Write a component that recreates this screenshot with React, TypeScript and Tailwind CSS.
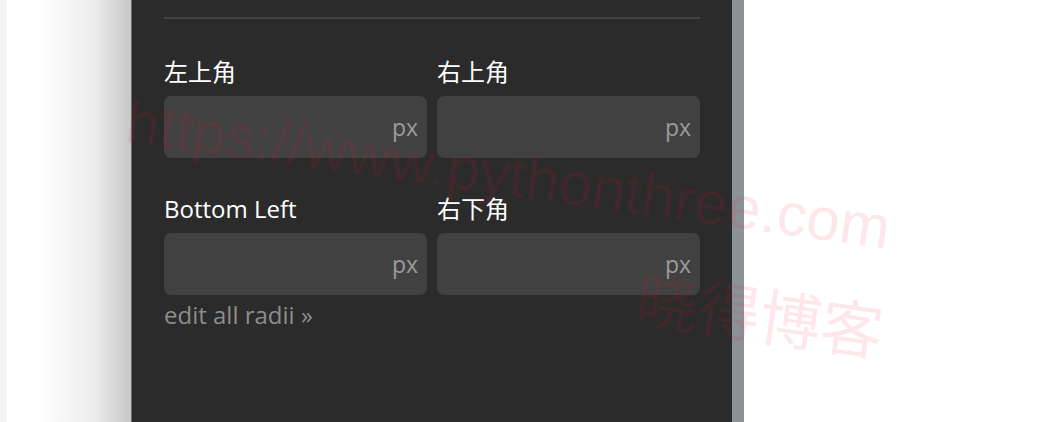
import React from "react";

const corners = [
  { id: "tl", label: "左上角" },
  { id: "tr", label: "右上角" },
  { id: "bl", label: "Bottom Left" },
  { id: "br", label: "右下角" },
];

function RadiusField({ label }: { label: string }) {
  return (
    <div className="flex flex-col">
      <label className="h-8 text-[24px] leading-8 text-white">{label}</label>
      <div className="mt-2 flex h-[62px] items-center justify-end rounded-[7px] bg-[#414141] pr-[9px]">
        <span className="text-[23px] leading-none text-[#9b9b9b]">px</span>
      </div>
    </div>
  );
}

export default function App() {
  return (
    <div className="relative flex h-[422px] w-[1050px] overflow-hidden bg-white font-['Open_Sans','Noto_Sans_CJK_SC',sans-serif]">
      <div className="w-[7px] bg-[#f4f4f4]" />
      <div className="w-[124px] bg-linear-to-r from-white from-25% via-[#ececec] via-70% to-[#c7c7c7]" />

      {/* panel */}
      <div className="w-[601px] border-l border-[#6a6a6a] bg-[#2b2b2b] px-8 pt-[17px]">
        <div className="h-[2px] bg-[#434343]" />

        <div className="mt-[37px] grid grid-cols-2 gap-x-[10px] gap-y-[35px]">
          {corners.map((c) => (
            <RadiusField key={c.id} label={c.label} />
          ))}
        </div>

        <button className="mt-1 h-8 text-[24px] leading-8 text-[#8d8d8d]">edit all radii »</button>
      </div>

      <div className="w-[12px] bg-[#8b9299]" />
      <div className="flex-1" />

      {/* watermark */}
      <div className="pointer-events-none absolute inset-0 font-['Liberation_Sans','Noto_Sans_CJK_SC',sans-serif] text-[rgba(232,20,50,0.1)]">
        <span className="absolute left-[131px] top-[92px] origin-top-left rotate-[8deg] whitespace-nowrap text-[60px] leading-none">
          https://www.pythonthree.com
        </span>
        <span className="absolute left-[641px] top-[270px] origin-top-left rotate-[8deg] whitespace-nowrap text-[62px] leading-none">
          晓得博客
        </span>
      </div>
    </div>
  );
}
